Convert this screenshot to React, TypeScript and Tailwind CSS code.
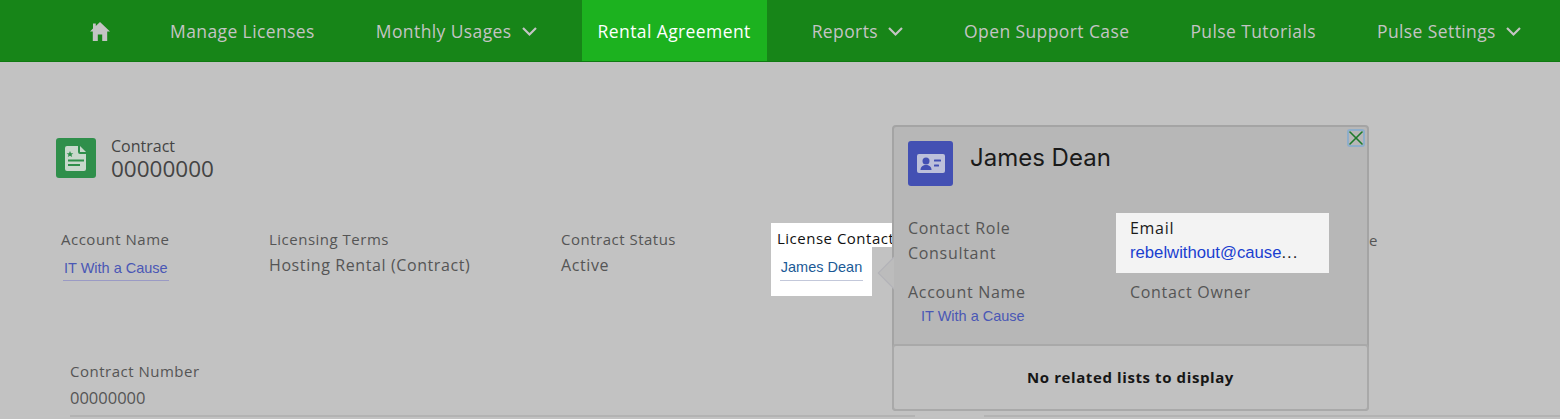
import { X } from 'lucide-react'

const navItems = [
  { label: 'Manage Licenses' },
  { label: 'Monthly Usages', menu: true },
  { label: 'Rental Agreement', active: true },
  { label: 'Reports', menu: true },
  { label: 'Open Support Case' },
  { label: 'Pulse Tutorials' },
  { label: 'Pulse Settings', menu: true },
]

function Field({ label, children, className }: { label: string; children: React.ReactNode; className?: string }) {
  return (
    <div className={className}>
      <p className="text-[15px] leading-[20px] tracking-[0.5px] text-[#555]">{label}</p>
      {children}
    </div>
  )
}

function HomeIcon() {
  return (
    <svg width="20" height="19" viewBox="0 0 20 19" fill="#c4c4c4">
      <path d="M10 0L20 9.500h-2.800V19h-5v-6.500H7.800V19h-5V9.500H0L3 6.600V1.500h2.800v2.400z" />
    </svg>
  )
}

function Chevron() {
  return (
    <svg width="15" height="10" viewBox="0 0 15 10" fill="none" stroke="#c4c4c4" strokeWidth="2.200" className="ml-[10px] mt-[2px]">
      <path d="M1 1l6.500 6.500L14 1" />
    </svg>
  )
}

function ContractIcon() {
  return (
    <div className="w-10 h-10 rounded-[3px] bg-[#2f8f4b] flex items-center justify-center shrink-0">
      <svg width="22" height="25" viewBox="0 0 22 25">
        <path d="M2 0h11v6a2 2 0 0 0 2 2h6v15a2 2 0 0 1-2 2H2a2 2 0 0 1-2-2V2a2 2 0 0 1 2-2z" fill="#c8d8cc" />
        <path d="M15 0l6 6h-6z" fill="#c8d8cc" />
        <path d="M5 5l1 2.200h2.300L6.500 8.700l.7 2.300L5 9.700 2.800 11l.7-2.300-1.800-1.500H4z" fill="#2f8f4b" />
        <rect x="3" y="13.500" width="16" height="2" fill="#2f8f4b" />
        <rect x="3" y="18" width="12" height="2" fill="#2f8f4b" />
      </svg>
    </div>
  )
}

function ContactIcon() {
  return (
    <div className="w-[45px] h-[45px] rounded-[3px] bg-[#4350b3] flex items-center justify-center shrink-0">
      <svg width="28" height="19" viewBox="0 0 28 19">
        <rect width="28" height="19" rx="2" fill="#bcc0da" />
        <circle cx="9" cy="7" r="3.500" fill="#4350b3" />
        <path d="M3.500 16c0-3.500 2.500-5 5.500-5s5.500 1.500 5.500 5z" fill="#4350b3" />
        <rect x="17" y="5.500" width="7" height="2" rx="0.500" fill="#4350b3" />
        <rect x="17" y="10.500" width="5" height="2" rx="0.500" fill="#4350b3" />
      </svg>
    </div>
  )
}

export default function App() {
  return (
    <div className="relative w-[1560px] h-[419px] overflow-hidden bg-[#c2c2c2] font-['Open_Sans',sans-serif]">
      <nav className="h-[62px] bg-[#178518] border-b border-[#0f7a12] flex items-stretch gap-[29px] pl-[74px]">
        <div className="w-[51px] flex items-center justify-center pt-[2px]">
          <HomeIcon />
        </div>
        {navItems.map((item) => (
          <div
            key={item.label}
            className={`flex items-center px-4 pt-[1px] text-[17.500px] tracking-[0.4px] whitespace-nowrap ${
              item.active ? 'bg-[#1cb21f] text-white' : 'text-[#c4c4c4]'
            }`}
          >
            <span>{item.label}</span>
            {item.menu && <Chevron />}
          </div>
        ))}
      </nav>

      <div className="pl-[56px] pt-[76px]">
        <div className="flex items-start gap-[15px]">
          <ContractIcon />
          <div className="text-[#444]">
            <p className="text-[16px] leading-[16px]">Contract</p>
            <p className="mt-[3px] text-[22.500px] leading-[24px]">00000000</p>
          </div>
        </div>

        <div className="flex mt-[48px] pl-[5px]">
          <Field label="Account Name" className="w-[208px]">
            <p className="mt-[10px] ml-[2px] w-[106px] border-b border-[#9a9ac4] pb-[3px] pl-[1px] font-['Liberation_Sans',sans-serif] text-[14.500px] leading-[18px] text-[#4a57b5]">
              IT With a Cause
            </p>
          </Field>
          <Field label="Licensing Terms" className="w-[292px]">
            <p className="mt-[6px] text-[16px] leading-[20px] tracking-[0.6px] text-[#555]">Hosting Rental (Contract)</p>
          </Field>
          <Field label="Contract Status" className="w-[210px]">
            <p className="mt-[6px] text-[16px] leading-[20px] tracking-[0.6px] text-[#555]">Active</p>
          </Field>
        </div>

        <div className="mt-[80px] pl-[14px]">
          <Field label="Contract Number">
            <p className="mt-[7px] text-[16.500px] leading-[20px] text-[#555]">00000000</p>
          </Field>
        </div>
        <div className="flex mt-[7px] ml-[14px] gap-[69px]">
          <div className="w-[845px] h-[2px] bg-[#b3b3b3]" />
          <div className="w-[576px] h-[2px] bg-[#b3b3b3]" />
        </div>
      </div>

      <span className="absolute left-[1369px] top-[230px] text-[15px] leading-[20px] text-[#555]">e</span>

      {/* highlighted trigger, the popover sits above it */}
      <div className="absolute left-[771px] top-[223px] w-[121px] h-[24px] bg-white" />
      <div className="absolute left-[771px] top-[223px] w-[101px] h-[73px] bg-white pt-[35px]">
        <p className="mx-[9px] border-b border-[#c3c8da] pb-[4px] text-center font-['Liberation_Sans',sans-serif] text-[14.500px] leading-[18px] text-[#1b5a96]">
          James Dean
        </p>
      </div>
      <p className="absolute left-[777px] top-[228px] w-[115px] overflow-hidden whitespace-nowrap text-[15px] leading-[20px] tracking-[0.5px] text-[#111]">
        License Contact
      </p>

      <div className="absolute left-[892px] top-[125px] w-[477px] h-[286px] rounded-[4px] border-2 border-[#a4a4a4] bg-[#b7b7b7] flex flex-col">
        <div className="absolute left-[-19px] top-[128px] w-[19px] h-[36px] overflow-hidden">
          <div className="absolute left-[8px] top-[5px] w-[26px] h-[26px] rotate-45 bg-[#bcbcbc] border border-[#b2b2b8]" />
        </div>
        <button className="absolute right-[2px] top-[2px] w-[18px] h-[18px] rounded-[3px] border-2 border-[#8eaecb] flex items-center justify-center text-[#1d7a2c]">
          <X size={24} strokeWidth={1.600} className="shrink-0" />
        </button>

        <div className="flex-1 pl-[14px] pt-[14px]">
          <div className="flex gap-[17px]">
            <ContactIcon />
            <p className="pt-[1px] font-['Inter',sans-serif] text-[24px] leading-[32px] text-[#1a1a1a]">James Dean</p>
          </div>
          <div className="grid grid-cols-[208px_1fr] mt-[27px]">
            <div className="pt-[5px]">
              <p className="text-[16px] leading-[20px] tracking-[0.7px] text-[#555]">Contact Role</p>
              <p className="mt-[5px] text-[16px] leading-[20px] tracking-[0.7px] text-[#555]">Consultant</p>
            </div>
            <div className="w-[213px] h-[60px] bg-[#f3f3f3] pl-[14px] pt-[5px]">
              <p className="text-[16px] leading-[20px] tracking-[0.7px] text-[#1a1a1a]">Email</p>
              <p className="mt-[5px] font-['Liberation_Sans',sans-serif] text-[16.700px] leading-[20px] text-[#1a3fd0] whitespace-nowrap">
                rebelwithout@cause<span className="tracking-[1px] text-[#222]">...</span>
              </p>
            </div>
            <div className="mt-[9px]">
              <p className="text-[16px] leading-[20px] tracking-[0.7px] text-[#555]">Account Name</p>
              <p className="mt-[5px] ml-[13px] font-['Liberation_Sans',sans-serif] text-[14.500px] leading-[18px] text-[#4a57b5]">IT With a Cause</p>
            </div>
            <div className="mt-[9px] pl-[14px]">
              <p className="text-[16px] leading-[20px] tracking-[0.7px] text-[#555]">Contact Owner</p>
            </div>
          </div>
        </div>

        <div className="h-[67px] -mx-[2px] -mb-[2px] rounded-[4px] border-2 border-[#a9a9a9] bg-[#c1c1c1] flex items-center justify-center text-[15px] font-bold tracking-[0.6px] text-[#161616]">
          No related lists to display
        </div>
      </div>
    </div>
  )
}
